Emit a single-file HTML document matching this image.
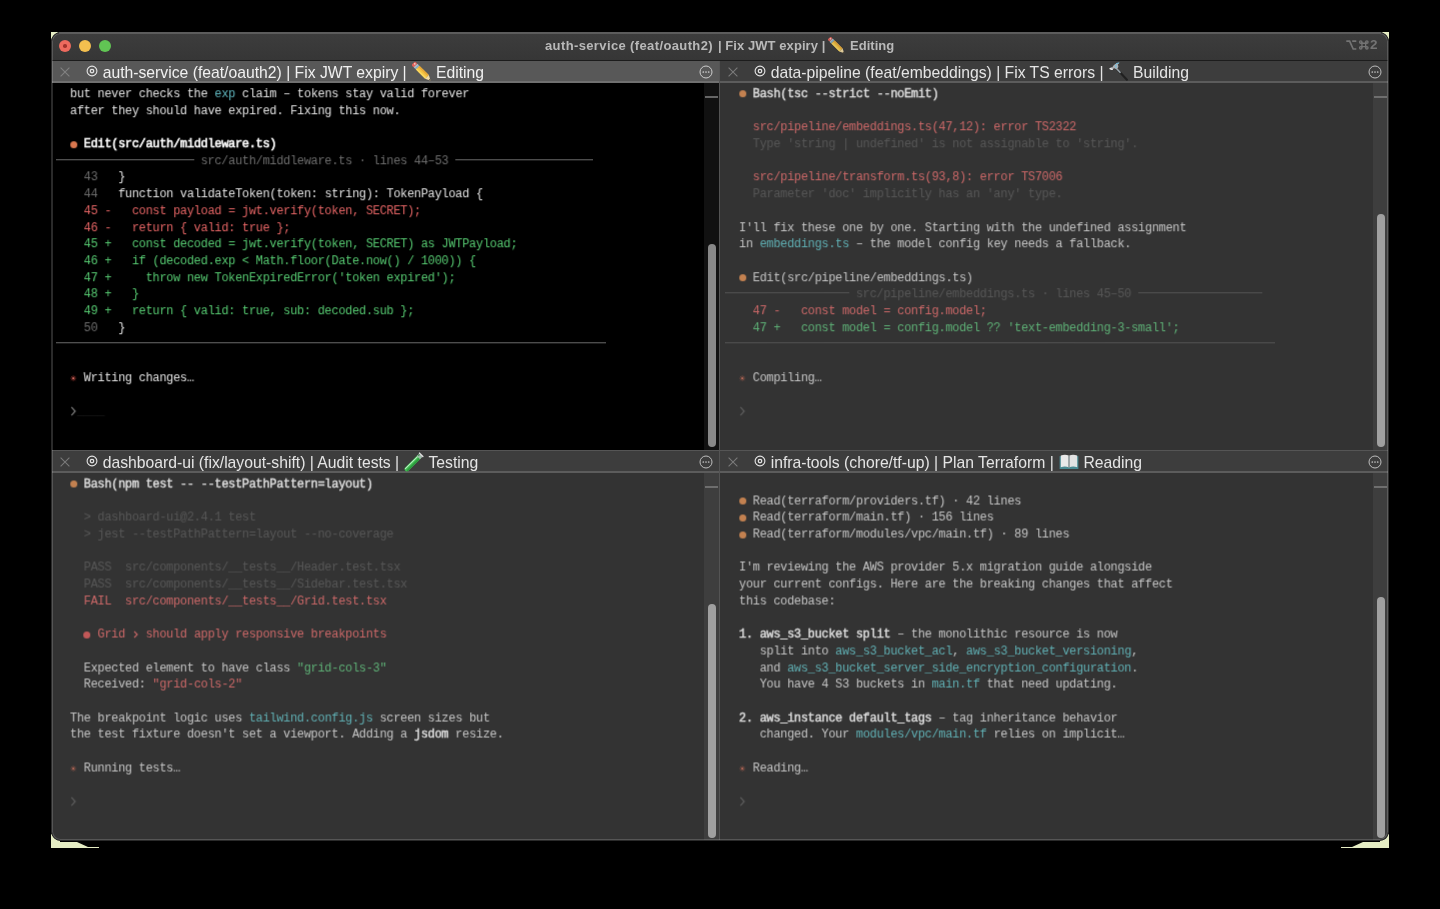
<!DOCTYPE html>
<html><head><meta charset="utf-8"><title>auth-service</title>
<style>
html,body{margin:0;padding:0;background:#000;}
body{width:1440px;height:909px;position:relative;overflow:hidden;font-family:"Liberation Sans",sans-serif;}
.abs{position:absolute}
#clip{position:absolute;left:0;top:0;width:1440px;height:909px;clip-path:inset(32px 51px 68px 51px round 9.5px)}
#win{position:absolute;left:51px;top:32px;width:1338px;height:809px;border-radius:10px;background:#333;overflow:hidden;}
#winb{position:absolute;left:51px;top:32px;width:1336px;height:807px;border-radius:9.5px;border:1px solid #2a2a2a;box-shadow:inset 0 0 0 1px rgba(255,255,255,0.17);pointer-events:none;z-index:50}
#wint{position:absolute;left:59px;top:32px;width:1322px;height:1.5px;background:#5c5c5c;z-index:51}
#tbar{position:absolute;left:0;top:0;width:1338px;height:28px;background:linear-gradient(#3d3d3d,#363636);border-bottom:1px solid #1c1c1c}
.tl{position:absolute;top:8px;width:12px;height:12px;border-radius:50%}
.title{will-change:transform;position:absolute;top:37.5px;font:bold 13px/16px "Liberation Sans",sans-serif;color:#b9b9b9;white-space:pre}
.tab{will-change:transform;position:absolute;height:20px;border-bottom:2px solid #666;color:#e4e4e4;font:15.72px/20px "Liberation Sans",sans-serif;white-space:pre}
.tab.act{background:#585858;border-bottom-color:#707070;color:#f0f0f0}
.tab.ina{background:#3d3d3d;border-bottom-color:#5c5c5c}
.tab span{position:absolute;top:0}
.tx{left:8.2px;top:5.5px!important;color:#828282;line-height:0}
.ina .tx{color:#7a7a7a}
.tt{left:33.9px;top:3.6px!important;line-height:0;color:#e6e6e6}
.ttl{left:50.7px;top:2px!important}
.ttl2{top:2px!important}
.tm{right:6px;top:3.6px!important;line-height:0;color:#cdcdcd}
.ina .tm{color:#bdbdbd}
.emo{position:absolute}
.pane{will-change:transform;transform:translate(0.3px,0.25px) rotate(0.004deg);position:absolute;font:12.0px/16.695px "Liberation Mono",monospace;letter-spacing:-0.320px;white-space:pre}
.pane.lo{transform:translate(0.3px,0.5px) rotate(0.004deg)}
.ln{position:absolute;left:0;height:16.695px;white-space:pre}
i{font-style:normal}
.bl{display:inline-block;width:6.88px;height:7px;position:relative;vertical-align:baseline}
.bl:after{content:"";position:absolute;left:-0.2px;top:0.45px;width:7px;height:7px;border-radius:50%;background:currentColor}
.rl{display:inline-block;height:1px;vertical-align:middle;background:currentColor;position:relative;top:-1.5px}
.st{display:inline-block;width:6.88px;height:7px;line-height:0;vertical-align:baseline}
.ch{display:inline-block;width:6.88px;height:7px;line-height:0;vertical-align:baseline}
.ch svg{position:relative;left:0.9px;top:0.4px}
.pr{display:inline-block;width:6.88px;height:8px;line-height:0;vertical-align:baseline}
.pr svg{position:relative;left:0.6px;top:1.8px}
.st svg{position:relative;left:0.6px;top:0.1px}
.pa .stc{fill:#f08478} .pi .stc{fill:#c87460}
/* active pane colours */
.pa .f{color:#1d1d1d} .pa .n{color:#e0e0e0} .pa .b{color:#fff;-webkit-text-stroke:0.55px #fff} .pa .c{color:#5fb6be} .pa .d{color:#6c6c6c}
.pa .r{color:#e46464} .pa .g{color:#55c870} .pa .pr{color:#7c7c7c} .pa .ob{color:#d9774f} .pa .rl{color:#6a6a6a} .pa .st{color:#c8473f}
/* inactive pane colours */
.pi .n{color:#c2c2c2} .pi .b{color:#dedede;-webkit-text-stroke:0.4px #dedede} .pi .c{color:#5eadb1} .pi .d{color:#555555}
.pi .r{color:#c96666} .pi .g{color:#5cae74} .pi .pr{color:#5c5c5c} .pi .ob{color:#c38150} .pi .rb{color:#c25858} .pi .rl{color:#525252} .pi .st{color:#a05a4a}
.trk{position:absolute;width:14.6px}
.thm{position:absolute;width:8px;border-radius:4px}
.mk{position:absolute;height:2px;width:13.6px}
</style></head>
<body>
<svg class="abs" style="left:0;top:0" width="1440" height="909" viewBox="0 0 1440 909">
<g fill="#e6edc4">
<path d="M51 32H59L51 40Z"/>
<path d="M1389 32H1381L1389 40Z"/>
<path d="M51 834V848H99V847H88L77 842H60V834Z"/>
<path d="M1389 834V848H1341V847H1352L1363 842H1380V834Z"/>
</g></svg>
<div id="clip">
<div id="win">
<div id="tbar"></div>
<div class="tl" style="left:8px;background:#ed6a5e"></div><div class="abs" style="left:12.2px;top:12.3px;width:3.6px;height:3.4px;border-radius:50%;background:#a0322c"></div>
<div class="tl" style="left:28px;background:#f4bf4f"></div>
<div class="tl" style="left:47.8px;background:#61c554"></div>
</div>
<div class="title" style="left:545px;letter-spacing:0.377px">auth-service (feat/oauth2)</div>
<div class="title" style="left:717.5px;letter-spacing:0.06px">| Fix JWT expiry |</div>
<div class="title" style="left:849.8px;letter-spacing:0.04px">Editing</div>
<svg class="emo" style="left:828.2px;top:36.6px;width:17.4px;height:17.4px;opacity:.88" viewBox="0 0 20 20" width="20" height="20"><g transform="rotate(45 10 10)"><rect x="-2.4" y="7.4" width="3.4" height="5.2" rx="1.5" fill="#e8625a"/><rect x="-1.6" y="8.6" width="1.6" height="1.6" rx="0.8" fill="#f3d6d2"/><rect x="0.8" y="7.4" width="3.2" height="5.2" fill="#b4bcc2"/><rect x="2.4" y="7.4" width="0.9" height="5.2" fill="#6fa9c8"/><rect x="4" y="7.4" width="13" height="5.2" fill="#f5c443"/><rect x="4" y="7.4" width="13" height="1.7" fill="#e8a838"/><rect x="4" y="10.9" width="13" height="1.7" fill="#fad860"/><path d="M17 7.4L22.2 10L17 12.6Z" fill="#f3dca6"/><path d="M20.4 9.1L22.4 10L20.4 10.9Z" fill="#4a4038"/></g></svg>
<svg viewBox="0 0 32 12" width="32" height="12" style="position:absolute;left:1345.5px;top:38.6px"><g fill="none" stroke="#747474" stroke-width="1.7"><path d="M0.3 2.1H3.6L7.2 10H10.3M6.2 2.1H10.3"/><g transform="translate(17.8 5.9)" stroke-width="1.35"><path d="M-1.85 -2.9V2.9M1.85 -2.9V2.9M-3.05 -1.7H3.05M-3.05 1.7H3.05"/><circle cx="-3.05" cy="-2.9" r="1.2"/><circle cx="3.05" cy="-2.9" r="1.2"/><circle cx="-3.05" cy="2.9" r="1.2"/><circle cx="3.05" cy="2.9" r="1.2"/></g></g></svg>
<div class="abs" style="will-change:transform;left:1369.8px;top:36.9px;font:bold 13.5px/16px 'Liberation Sans',sans-serif;color:#747474">2</div>
<div class="abs" style="left:52px;top:83px;width:667px;height:367px;background:#000"></div>
<div class="abs" style="left:719px;top:61px;width:1px;height:779px;background:#545454"></div>
<div class="abs" style="left:52px;top:450px;width:1336px;height:1px;background:#555"></div>
<div class="tab act" style="left:52px;top:61px;width:667px">
<span class="tx"><svg class="ix" viewBox="0 0 10 10" width="10" height="10"><path d="M0.6 0.6L9.4 9.4M9.4 0.6L0.6 9.4" stroke="currentColor" stroke-width="1.05" fill="none"/></svg></span><span class="tt"><svg class="itg" viewBox="0 0 12 12" width="12" height="12"><circle cx="6" cy="6" r="4.9" fill="none" stroke="currentColor" stroke-width="1.1"/><circle cx="6" cy="6" r="1.75" fill="none" stroke="currentColor" stroke-width="1.25"/></svg></span><span class="ttl">auth-service (feat/oauth2) | Fix JWT expiry | </span><svg class="emo" style="left:359.5px;top:1px" viewBox="0 0 20 20" width="20" height="20"><g transform="rotate(45 10 10)"><rect x="-2.4" y="7.4" width="3.4" height="5.2" rx="1.5" fill="#e8625a"/><rect x="-1.6" y="8.6" width="1.6" height="1.6" rx="0.8" fill="#f3d6d2"/><rect x="0.8" y="7.4" width="3.2" height="5.2" fill="#b4bcc2"/><rect x="2.4" y="7.4" width="0.9" height="5.2" fill="#6fa9c8"/><rect x="4" y="7.4" width="13" height="5.2" fill="#f5c443"/><rect x="4" y="7.4" width="13" height="1.7" fill="#e8a838"/><rect x="4" y="10.9" width="13" height="1.7" fill="#fad860"/><path d="M17 7.4L22.2 10L17 12.6Z" fill="#f3dca6"/><path d="M20.4 9.1L22.4 10L20.4 10.9Z" fill="#4a4038"/></g></svg><span class="ttl2" style="left:384px">Editing</span><span class="tm"><svg class="imo" viewBox="0 0 14 14" width="14" height="14"><circle cx="7" cy="7" r="6" fill="none" stroke="currentColor" stroke-width="1"/><circle cx="4.3" cy="7" r="0.85" fill="currentColor"/><circle cx="7" cy="7" r="0.85" fill="currentColor"/><circle cx="9.7" cy="7" r="0.85" fill="currentColor"/></svg></span>
</div>
<div class="tab ina" style="left:720px;top:61px;width:668px">
<span class="tx"><svg class="ix" viewBox="0 0 10 10" width="10" height="10"><path d="M0.6 0.6L9.4 9.4M9.4 0.6L0.6 9.4" stroke="currentColor" stroke-width="1.05" fill="none"/></svg></span><span class="tt"><svg class="itg" viewBox="0 0 12 12" width="12" height="12"><circle cx="6" cy="6" r="4.9" fill="none" stroke="currentColor" stroke-width="1.1"/><circle cx="6" cy="6" r="1.75" fill="none" stroke="currentColor" stroke-width="1.25"/></svg></span><span class="ttl">data-pipeline (feat/embeddings) | Fix TS errors | </span><svg class="emo" style="left:388.6px;top:0.8px" viewBox="0 0 20 20" width="20" height="20"><path d="M7.2 6.2L17.9 17.7" stroke="#202020" stroke-width="2.1" stroke-linecap="round"/><path d="M6.9 5.9L11 10.3" stroke="#9aa4aa" stroke-width="1.6" stroke-linecap="round"/><path d="M0.8 6.6C1.4 5.2 2.6 5 3.2 5.4C4.4 2.6 7.6 0.9 10.4 0.7C9.6 1.5 9.2 2 8.8 2.8C9.6 4 9.6 5.2 8.6 6.2C7.6 7 6.4 6.8 5.4 6.2C4.4 6.4 3.8 7 3.4 8C2.4 8 1.2 7.6 0.8 6.6Z" fill="#adb1b4"/><path d="M7.4 1.6L9.8 0.9M6.4 3.2L7.4 3.6M6.4 4.8L7.6 5.2" stroke="#6cc3e6" stroke-width="0.9" stroke-linecap="round"/><path d="M1 6.6L3.2 7.4" stroke="#f2f2f2" stroke-width="1.3" stroke-linecap="round"/></svg><span class="ttl2" style="left:413px">Building</span><span class="tm"><svg class="imo" viewBox="0 0 14 14" width="14" height="14"><circle cx="7" cy="7" r="6" fill="none" stroke="currentColor" stroke-width="1"/><circle cx="4.3" cy="7" r="0.85" fill="currentColor"/><circle cx="7" cy="7" r="0.85" fill="currentColor"/><circle cx="9.7" cy="7" r="0.85" fill="currentColor"/></svg></span>
</div>
<div class="tab ina" style="left:52px;top:451px;width:667px">
<span class="tx"><svg class="ix" viewBox="0 0 10 10" width="10" height="10"><path d="M0.6 0.6L9.4 9.4M9.4 0.6L0.6 9.4" stroke="currentColor" stroke-width="1.05" fill="none"/></svg></span><span class="tt"><svg class="itg" viewBox="0 0 12 12" width="12" height="12"><circle cx="6" cy="6" r="4.9" fill="none" stroke="currentColor" stroke-width="1.1"/><circle cx="6" cy="6" r="1.75" fill="none" stroke="currentColor" stroke-width="1.25"/></svg></span><span class="ttl">dashboard-ui (fix/layout-shift) | Audit tests | </span><svg class="emo" style="left:351.8px;top:0.6px" viewBox="0 0 20 20" width="20" height="20"><g transform="rotate(-45 10 10)"><rect x="-2.4" y="7.7" width="21.6" height="4.6" rx="2.3" fill="#3dba4e"/><rect x="-1.4" y="8.1" width="18" height="1.1" rx="0.55" fill="#b9eec2"/><rect x="-1" y="10.7" width="19" height="1.3" rx="0.65" fill="#2c9a3e"/><rect x="16.2" y="7.7" width="3.6" height="4.6" fill="#b9c0c2" opacity=".8"/><rect x="19.4" y="6.9" width="1.5" height="6.2" rx="0.75" fill="#dedede"/><rect x="17.4" y="8" width="2" height="1.2" fill="#4e8a5a"/></g></svg><span class="ttl2" style="left:376.5px">Testing</span><span class="tm"><svg class="imo" viewBox="0 0 14 14" width="14" height="14"><circle cx="7" cy="7" r="6" fill="none" stroke="currentColor" stroke-width="1"/><circle cx="4.3" cy="7" r="0.85" fill="currentColor"/><circle cx="7" cy="7" r="0.85" fill="currentColor"/><circle cx="9.7" cy="7" r="0.85" fill="currentColor"/></svg></span>
</div>
<div class="tab ina" style="left:720px;top:451px;width:668px">
<span class="tx"><svg class="ix" viewBox="0 0 10 10" width="10" height="10"><path d="M0.6 0.6L9.4 9.4M9.4 0.6L0.6 9.4" stroke="currentColor" stroke-width="1.05" fill="none"/></svg></span><span class="tt"><svg class="itg" viewBox="0 0 12 12" width="12" height="12"><circle cx="6" cy="6" r="4.9" fill="none" stroke="currentColor" stroke-width="1.1"/><circle cx="6" cy="6" r="1.75" fill="none" stroke="currentColor" stroke-width="1.25"/></svg></span><span class="ttl">infra-tools (chore/tf-up) | Plan Terraform | </span><svg class="emo" style="left:339px;top:3px" viewBox="0 0 20 16" width="20" height="16"><path d="M0.6 2.2H19.4V15H0.6Z" fill="#4a8a92"/><path d="M1.8 1.6C4.6 0.6 7.4 0.6 9.6 1.6V13.2C7.4 12.4 4.6 12.4 1.8 13.2Z" fill="#e9e9e9"/><path d="M18.2 1.6C15.4 0.6 12.6 0.6 10.4 1.6V13.2C12.6 12.4 15.4 12.4 18.2 13.2Z" fill="#e2e2e2"/><path d="M9.3 1.5H10.7V13.4H9.3Z" fill="#9a9a9a"/></svg><span class="ttl2" style="left:363.5px">Reading</span><span class="tm"><svg class="imo" viewBox="0 0 14 14" width="14" height="14"><circle cx="7" cy="7" r="6" fill="none" stroke="currentColor" stroke-width="1"/><circle cx="4.3" cy="7" r="0.85" fill="currentColor"/><circle cx="7" cy="7" r="0.85" fill="currentColor"/><circle cx="9.7" cy="7" r="0.85" fill="currentColor"/></svg></span>
</div>
<div class="trk" style="left:704px;top:83px;height:367px;background:#111"></div><div class="mk" style="left:704.5px;top:95.8px;background:#666"></div><div class="thm" style="left:708.4px;top:244px;height:203px;background:#888"></div>
<div class="trk" style="left:1373px;top:83px;height:367px;background:#3e3e3e"></div><div class="mk" style="left:1373.5px;top:95.8px;background:#6e6e6e"></div><div class="thm" style="left:1377.4px;top:214px;height:233px;background:#a0a0a0"></div>
<div class="trk" style="left:704px;top:473px;height:367px;background:#3e3e3e"></div><div class="mk" style="left:704.5px;top:485.8px;background:#6e6e6e"></div><div class="thm" style="left:708.4px;top:604px;height:234px;background:#a0a0a0"></div>
<div class="trk" style="left:1373px;top:473px;height:367px;background:#3e3e3e"></div><div class="mk" style="left:1373.5px;top:485.8px;background:#6e6e6e"></div><div class="thm" style="left:1377.4px;top:597px;height:241px;background:#a0a0a0"></div>
<div class="pane pa" style="left:56.24px;top:86.40px">
<div class="ln" style="top:0.00px"><span class="n">  but never checks the </span><span class="c">exp</span><span class="n"> claim – tokens stay valid forever</span></div>
<div class="ln" style="top:16.70px"><span class="n">  after they should have expired. Fixing this now.</span></div>
<div class="ln" style="top:50.09px">  <i class="bl ob"></i> <span class="b">Edit(src/auth/middleware.ts)</span></div>
<div class="ln" style="top:66.78px"><i class="rl" style="width:137.60px"></i><span class="d"> src/auth/middleware.ts · lines 44–53 </span><i class="rl" style="width:137.60px"></i></div>
<div class="ln" style="top:83.47px"><span class="d">    43</span><span class="n">   }</span></div>
<div class="ln" style="top:100.17px"><span class="d">    44</span><span class="n">   function validateToken(token: string): TokenPayload {</span></div>
<div class="ln" style="top:116.87px"><span class="r">    45 -   const payload = jwt.verify(token, SECRET);</span></div>
<div class="ln" style="top:133.56px"><span class="r">    46 -   return { valid: true };</span></div>
<div class="ln" style="top:150.25px"><span class="g">    45 +   const decoded = jwt.verify(token, SECRET) as JWTPayload;</span></div>
<div class="ln" style="top:166.95px"><span class="g">    46 +   if (decoded.exp &lt; Math.floor(Date.now() / 1000)) {</span></div>
<div class="ln" style="top:183.65px"><span class="g">    47 +     throw new TokenExpiredError('token expired');</span></div>
<div class="ln" style="top:200.34px"><span class="g">    48 +   }</span></div>
<div class="ln" style="top:217.03px"><span class="g">    49 +   return { valid: true, sub: decoded.sub };</span></div>
<div class="ln" style="top:233.73px"><span class="d">    50</span><span class="n">   }</span></div>
<div class="ln" style="top:250.43px"><i class="rl" style="width:550.40px"></i></div>
<div class="ln" style="top:283.81px">  <i class="st"><svg viewBox="0 0 8 8" width="6.2" height="6.2"><g stroke="currentColor" stroke-width="1" stroke-linecap="round" opacity="0.7"><path d="M4 0.7V7.3M0.7 4H7.3M1.6 1.6L6.4 6.4M6.4 1.6L1.6 6.4"/></g><circle cx="4" cy="4" r="1.25" class="stc"/></svg></i> <span class="n">Writing changes…</span></div>
<div class="ln" style="top:317.20px">  <i class="pr"><svg viewBox="0 0 6 10" width="6" height="10"><path d="M1.2 0.9L4.9 5L1.2 9.1" fill="none" stroke="currentColor" stroke-width="1.25"/></svg></i><span class="f">____</span></div>
</div>
<div class="pane pi" style="left:725.24px;top:86.40px">
<div class="ln" style="top:0.00px">  <i class="bl ob"></i> <span class="b">Bash(tsc --strict --noEmit)</span></div>
<div class="ln" style="top:33.39px"><span class="r">    src/pipeline/embeddings.ts(47,12): error TS2322</span></div>
<div class="ln" style="top:50.09px"><span class="d">    Type 'string | undefined' is not assignable to 'string'.</span></div>
<div class="ln" style="top:83.47px"><span class="r">    src/pipeline/transform.ts(93,8): error TS7006</span></div>
<div class="ln" style="top:100.17px"><span class="d">    Parameter 'doc' implicitly has an 'any' type.</span></div>
<div class="ln" style="top:133.56px"><span class="n">  I'll fix these one by one. Starting with the undefined assignment</span></div>
<div class="ln" style="top:150.25px"><span class="n">  in </span><span class="c">embeddings.ts</span><span class="n"> – the model config key needs a fallback.</span></div>
<div class="ln" style="top:183.65px">  <i class="bl ob"></i> <span class="n">Edit(src/pipeline/embeddings.ts)</span></div>
<div class="ln" style="top:200.34px"><i class="rl" style="width:123.84px"></i><span class="d"> src/pipeline/embeddings.ts · lines 45–50 </span><i class="rl" style="width:123.84px"></i></div>
<div class="ln" style="top:217.03px"><span class="r">    47 -   const model = config.model;</span></div>
<div class="ln" style="top:233.73px"><span class="g">    47 +   const model = config.model ?? 'text-embedding-3-small';</span></div>
<div class="ln" style="top:250.43px"><i class="rl" style="width:550.40px"></i></div>
<div class="ln" style="top:283.81px">  <i class="st"><svg viewBox="0 0 8 8" width="6.2" height="6.2"><g stroke="currentColor" stroke-width="1" stroke-linecap="round" opacity="0.7"><path d="M4 0.7V7.3M0.7 4H7.3M1.6 1.6L6.4 6.4M6.4 1.6L1.6 6.4"/></g><circle cx="4" cy="4" r="1.25" class="stc"/></svg></i> <span class="n">Compiling…</span></div>
<div class="ln" style="top:317.20px">  <i class="pr"><svg viewBox="0 0 6 10" width="6" height="10"><path d="M1.2 0.9L4.9 5L1.2 9.1" fill="none" stroke="currentColor" stroke-width="1.25"/></svg></i></div>
</div>
<div class="pane pi lo" style="left:56.24px;top:476.40px">
<div class="ln" style="top:0.00px">  <i class="bl ob"></i> <span class="b">Bash(npm test -- --testPathPattern=layout)</span></div>
<div class="ln" style="top:33.39px"><span class="d">    &gt; dashboard-ui@2.4.1 test</span></div>
<div class="ln" style="top:50.09px"><span class="d">    &gt; jest --testPathPattern=layout --no-coverage</span></div>
<div class="ln" style="top:83.47px"><span class="d">    PASS  src/components/__tests__/Header.test.tsx</span></div>
<div class="ln" style="top:100.17px"><span class="d">    PASS  src/components/__tests__/Sidebar.test.tsx</span></div>
<div class="ln" style="top:116.87px"><span class="r">    FAIL  src/components/__tests__/Grid.test.tsx</span></div>
<div class="ln" style="top:150.25px">    <i class="bl rb"></i> <span class="r">Grid </span><i class="ch r"><svg viewBox="0 0 5 8" width="5" height="8"><path d="M1 1L4 4L1 7" fill="none" stroke="currentColor" stroke-width="1.1"/></svg></i><span class="r"> should apply responsive breakpoints</span></div>
<div class="ln" style="top:183.65px"><span class="n">    Expected element to have class </span><span class="g">"grid-cols-3"</span></div>
<div class="ln" style="top:200.34px"><span class="n">    Received: </span><span class="r">"grid-cols-2"</span></div>
<div class="ln" style="top:233.73px"><span class="n">  The breakpoint logic uses </span><span class="c">tailwind.config.js</span><span class="n"> screen sizes but</span></div>
<div class="ln" style="top:250.43px"><span class="n">  the test fixture doesn't set a viewport. Adding a </span><span class="b">jsdom</span><span class="n"> resize.</span></div>
<div class="ln" style="top:283.81px">  <i class="st"><svg viewBox="0 0 8 8" width="6.2" height="6.2"><g stroke="currentColor" stroke-width="1" stroke-linecap="round" opacity="0.7"><path d="M4 0.7V7.3M0.7 4H7.3M1.6 1.6L6.4 6.4M6.4 1.6L1.6 6.4"/></g><circle cx="4" cy="4" r="1.25" class="stc"/></svg></i> <span class="n">Running tests…</span></div>
<div class="ln" style="top:317.20px">  <i class="pr"><svg viewBox="0 0 6 10" width="6" height="10"><path d="M1.2 0.9L4.9 5L1.2 9.1" fill="none" stroke="currentColor" stroke-width="1.25"/></svg></i></div>
</div>
<div class="pane pi lo" style="left:725.24px;top:476.40px">
<div class="ln" style="top:16.70px">  <i class="bl ob"></i> <span class="n">Read(terraform/providers.tf) · 42 lines</span></div>
<div class="ln" style="top:33.39px">  <i class="bl ob"></i> <span class="n">Read(terraform/main.tf) · 156 lines</span></div>
<div class="ln" style="top:50.09px">  <i class="bl ob"></i> <span class="n">Read(terraform/modules/vpc/main.tf) · 89 lines</span></div>
<div class="ln" style="top:83.47px"><span class="n">  I'm reviewing the AWS provider 5.x migration guide alongside</span></div>
<div class="ln" style="top:100.17px"><span class="n">  your current configs. Here are the breaking changes that affect</span></div>
<div class="ln" style="top:116.87px"><span class="n">  this codebase:</span></div>
<div class="ln" style="top:150.25px"><span class="b">  1. aws_s3_bucket split</span><span class="n"> – the monolithic resource is now</span></div>
<div class="ln" style="top:166.95px"><span class="n">     split into </span><span class="c">aws_s3_bucket_acl</span><span class="n">, </span><span class="c">aws_s3_bucket_versioning</span><span class="n">,</span></div>
<div class="ln" style="top:183.65px"><span class="n">     and </span><span class="c">aws_s3_bucket_server_side_encryption_configuration</span><span class="n">.</span></div>
<div class="ln" style="top:200.34px"><span class="n">     You have 4 S3 buckets in </span><span class="c">main.tf</span><span class="n"> that need updating.</span></div>
<div class="ln" style="top:233.73px"><span class="b">  2. aws_instance default_tags</span><span class="n"> – tag inheritance behavior</span></div>
<div class="ln" style="top:250.43px"><span class="n">     changed. Your </span><span class="c">modules/vpc/main.tf</span><span class="n"> relies on implicit…</span></div>
<div class="ln" style="top:283.81px">  <i class="st"><svg viewBox="0 0 8 8" width="6.2" height="6.2"><g stroke="currentColor" stroke-width="1" stroke-linecap="round" opacity="0.7"><path d="M4 0.7V7.3M0.7 4H7.3M1.6 1.6L6.4 6.4M6.4 1.6L1.6 6.4"/></g><circle cx="4" cy="4" r="1.25" class="stc"/></svg></i> <span class="n">Reading…</span></div>
<div class="ln" style="top:317.20px">  <i class="pr"><svg viewBox="0 0 6 10" width="6" height="10"><path d="M1.2 0.9L4.9 5L1.2 9.1" fill="none" stroke="currentColor" stroke-width="1.25"/></svg></i></div>
</div>
</div>
<div id="winb"></div><div id="wint"></div>
</body></html>
